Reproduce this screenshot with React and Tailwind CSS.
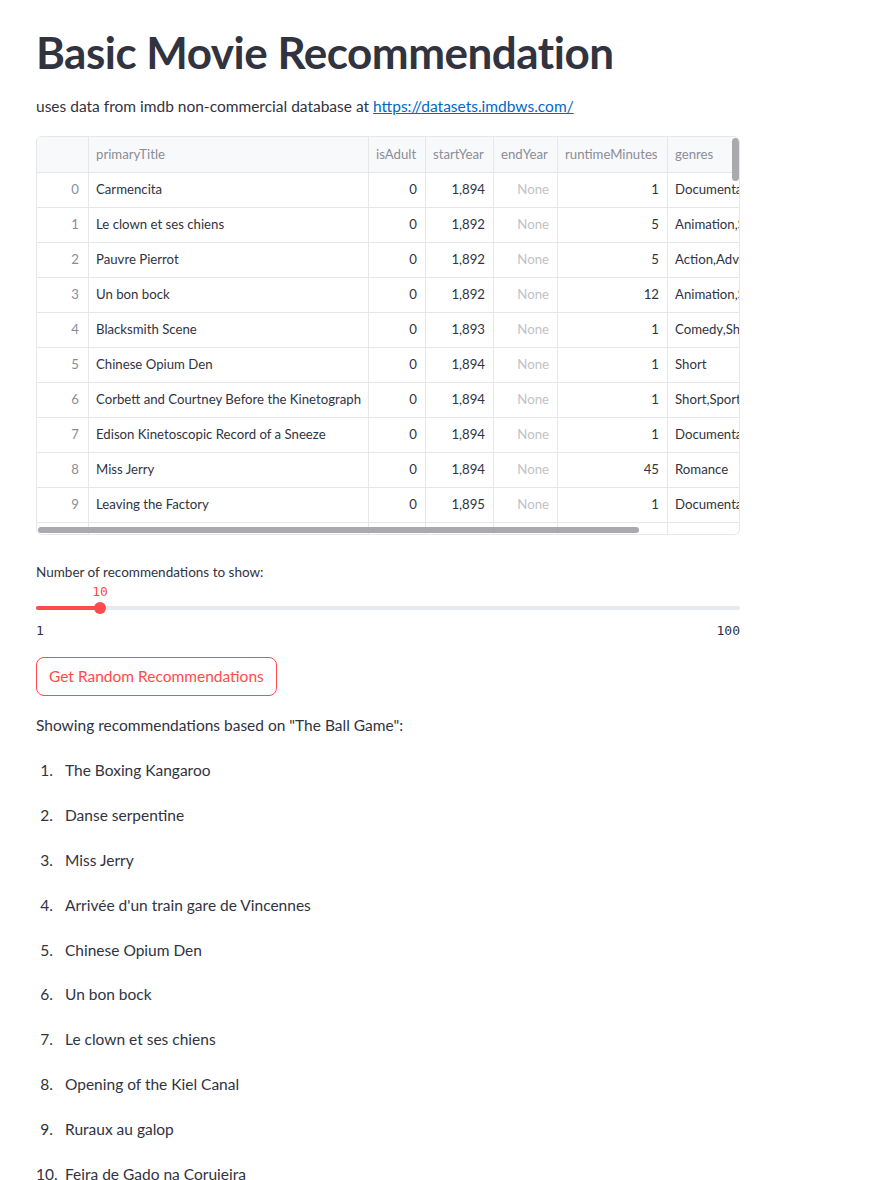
import React from "react";

const rows = [
  ["Carmencita", "0", "1,894", "1", "Documentary,Short"],
  ["Le clown et ses chiens", "0", "1,892", "5", "Animation,Short"],
  ["Pauvre Pierrot", "0", "1,892", "5", "Action,Adventure"],
  ["Un bon bock", "0", "1,892", "12", "Animation,Short"],
  ["Blacksmith Scene", "0", "1,893", "1", "Comedy,Short"],
  ["Chinese Opium Den", "0", "1,894", "1", "Short"],
  ["Corbett and Courtney Before the Kinetograph", "0", "1,894", "1", "Short,Sport"],
  ["Edison Kinetoscopic Record of a Sneeze", "0", "1,894", "1", "Documentary,Short"],
  ["Miss Jerry", "0", "1,894", "45", "Romance"],
  ["Leaving the Factory", "0", "1,895", "1", "Documentary,Short"],
];

const recs = [
  "The Boxing Kangaroo",
  "Danse serpentine",
  "Miss Jerry",
  "Arrivée d'un train gare de Vincennes",
  "Chinese Opium Den",
  "Un bon bock",
  "Le clown et ses chiens",
  "Opening of the Kiel Canal",
  "Ruraux au galop",
  "Feira de Gado na Corujeira",
];

const cols = "grid-cols-[52px_280px_57px_68px_64px_110px_120px]";

export default function App() {
  return (
    <div className="min-h-[1180px] bg-white text-[#31333f] font-['Lato','Liberation_Sans',sans-serif]">
      <div className="pl-[36px] w-[740px] pt-[26px]">
        <h1 className="text-[44px] font-bold leading-[52px] tracking-[-0.5px] text-[#31333f]">
          Basic Movie Recommendation
        </h1>
        <p className="mt-[16px] text-[15.5px] leading-[24px]">
          uses data from imdb non-commercial database at{" "}
          <a className="text-[#0068c9] underline" href="#">https://datasets.imdbws.com/</a>
        </p>

        <div className="relative mt-[18px] h-[399px] w-[704px] overflow-hidden rounded-[6px] border border-[#e6e7ea] text-[13.2px]">
          <div className={`grid ${cols} h-[36px] bg-[#f8f9fb] border-b border-[#e6e7ea] text-[#8a8d98]`}>
            <div className="border-r border-[#e6e7ea]"></div>
            <div className="px-[7px] flex items-center border-r border-[#e6e7ea]">primaryTitle</div>
            <div className="px-[7px] flex items-center border-r border-[#e6e7ea]">isAdult</div>
            <div className="px-[7px] flex items-center border-r border-[#e6e7ea]">startYear</div>
            <div className="px-[7px] flex items-center border-r border-[#e6e7ea]">endYear</div>
            <div className="px-[7px] flex items-center border-r border-[#e6e7ea]">runtimeMinutes</div>
            <div className="px-[7px] flex items-center whitespace-nowrap">genres</div>
          </div>
          {rows.map((r, i) => (
            <div key={i} className={`grid ${cols} h-[35px] border-b border-[#e6e7ea]`}>
              <div className="pr-[9px] flex items-center justify-end border-r border-[#e6e7ea] text-[#8a8d98]">{i}</div>
              <div className="px-[7px] flex items-center border-r border-[#e6e7ea] whitespace-nowrap overflow-hidden">{r[0]}</div>
              <div className="px-[8px] flex items-center justify-end border-r border-[#e6e7ea]">{r[1]}</div>
              <div className="px-[8px] flex items-center justify-end border-r border-[#e6e7ea]">{r[2]}</div>
              <div className="px-[8px] flex items-center justify-end border-r border-[#e6e7ea] text-[#c0c2c8]">None</div>
              <div className="px-[8px] flex items-center justify-end border-r border-[#e6e7ea]">{r[3]}</div>
              <div className="px-[7px] flex items-center whitespace-nowrap">{r[4]}</div>
            </div>
          ))}
          <div className={`grid ${cols} h-[35px]`}>
            <div className="border-r border-[#e6e7ea]"></div>
            <div className="border-r border-[#e6e7ea]"></div>
            <div className="border-r border-[#e6e7ea]"></div>
            <div className="border-r border-[#e6e7ea]"></div>
            <div className="border-r border-[#e6e7ea]"></div>
            <div className="border-r border-[#e6e7ea]"></div>
            <div></div>
          </div>
          <div className="absolute right-[0px] top-[1px] h-[43px] w-[7px] rounded-full bg-[#a9a9ae]"></div>
          <div className="absolute left-[1px] bottom-[1px] h-[6px] w-[601px] rounded-full bg-[#a9a9ae]"></div>
        </div>

        <div className="mt-[27px] text-[13.5px] leading-[20px]">Number of recommendations to show:</div>
        <div className="relative mt-[2px] h-[55px] w-[704px]">
          <div className="absolute left-[54px] top-0 w-[20px] text-center font-['DejaVu_Sans_Mono',monospace] text-[13px] text-[#ff4b4b] leading-[16px]">10</div>
          <div className="absolute left-0 top-[22px] h-[4px] w-[704px] rounded-full bg-[#e6e9ef]"></div>
          <div className="absolute left-0 top-[22px] h-[4px] w-[64px] rounded-full bg-[#ff4b4b]"></div>
          <div className="absolute left-[58px] top-[18px] h-[12px] w-[12px] rounded-full bg-[#ff4b4b]"></div>
          <div className="absolute left-0 top-[39px] font-['DejaVu_Sans_Mono',monospace] text-[13px] leading-[16px]">1</div>
          <div className="absolute right-0 top-[39px] font-['DejaVu_Sans_Mono',monospace] text-[13px] leading-[16px]">100</div>
        </div>

        <button className="mt-[18px] h-[39px] px-[12px] rounded-[8px] border border-[#ff4b4b] text-[#ff4b4b] text-[15.5px] bg-white">
          Get Random Recommendations
        </button>

        <p className="mt-[17px] text-[15.5px] leading-[24px]">
          Showing recommendations based on "The Ball Game":
        </p>
        <ol className="mt-[11px] text-[15.5px]">
          {recs.map((t, i) => (
            <li key={i} className="flex h-[44.8px] items-center leading-[24px]">
              <span className="w-[17px] text-right">{i + 1}.</span>
              <span className="ml-[12px]">{t}</span>
            </li>
          ))}
        </ol>
      </div>
    </div>
  );
}
